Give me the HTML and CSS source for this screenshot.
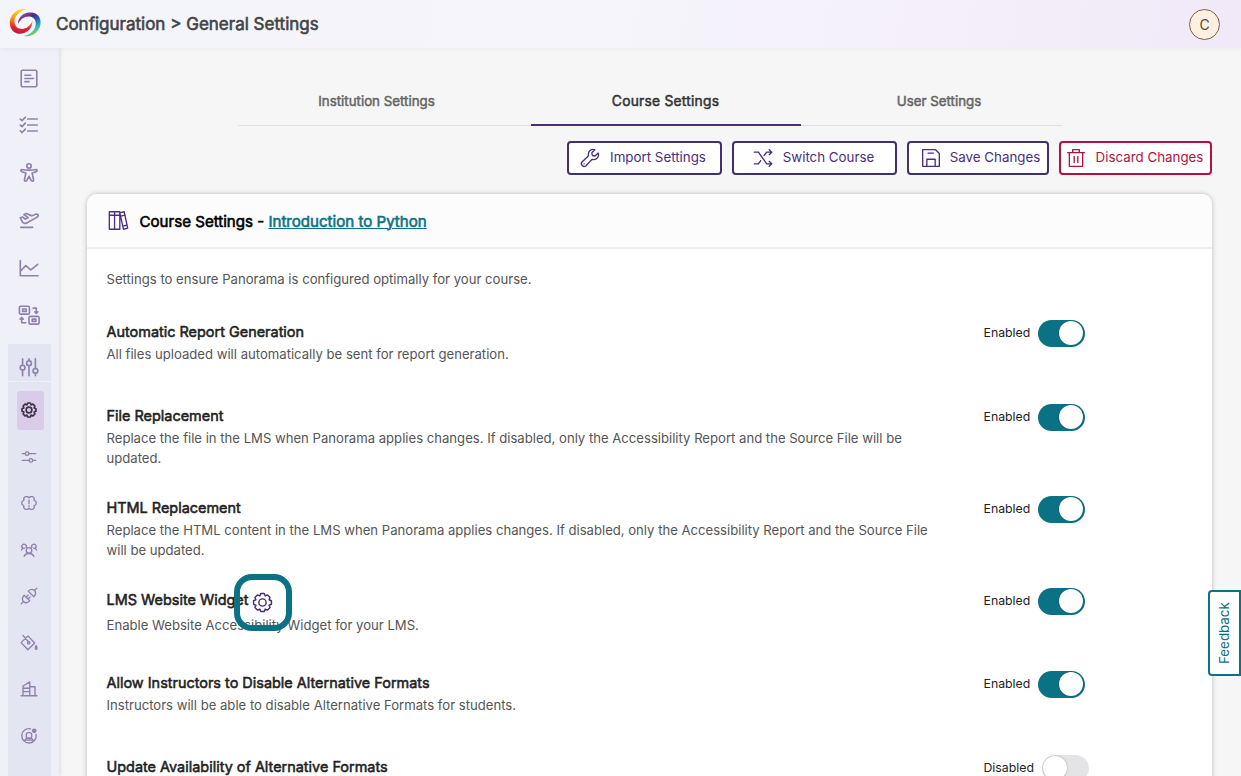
FILE: index.html
```html
<!DOCTYPE html>
<html lang="en">
<head>
<meta charset="utf-8">
<title>Configuration - General Settings</title>
<link rel="stylesheet" href="styles.css">
</head>
<body>

<!-- shared icons -->
<svg class="defs" width="0" height="0">
	<symbol id="gear" viewBox="0 0 24 24">
		<path d="M21.33 10.19V13.81L18.84 14.83 19.88 17.31 17.31 19.88 14.83 18.84 13.81 21.33H10.19L9.17 18.84 6.69 19.88 4.12 17.31 5.16 14.83 2.67 13.81V10.19L5.16 9.17 4.12 6.69 6.69 4.12 9.17 5.16 10.19 2.67H13.81L14.83 5.16 17.31 4.12 19.88 6.69 18.84 9.17Z"/>
		<circle cx="12" cy="12" r="3.8"/>
	</symbol>
</svg>

<header class="topbar">
	<svg class="logo" width="32" height="30" viewBox="9 8 32 30">
		<defs>
			<linearGradient id="warm" x1="0.6" y1="0" x2="0.5" y2="1">
				<stop offset="0" stop-color="#fbe21c"/>
				<stop offset=".4" stop-color="#f79a1e"/>
				<stop offset=".75" stop-color="#e3252b"/>
				<stop offset="1" stop-color="#b81f45"/>
			</linearGradient>
			<linearGradient id="cool" x1="0" y1="0.1" x2="0.55" y2="1">
				<stop offset="0" stop-color="#b04fa5"/>
				<stop offset=".35" stop-color="#4a2a86"/>
				<stop offset=".6" stop-color="#1f6cb8"/>
				<stop offset=".82" stop-color="#2fb9c4"/>
				<stop offset="1" stop-color="#8ccf4d"/>
			</linearGradient>
		</defs>
		<path fill="url(#warm)" d="M26.5 9.2C17 7.5 9.5 15 9.8 23C10 31 16 34.8 22 33.6C28 32.3 32.3 28 32.5 21C30 26.3 25.5 29.6 20.5 28.8C14.6 27.6 12.8 21 16.3 15.8C18.8 12.2 22.6 10 26.5 9.2Z"/>
		<path fill="url(#cool)" d="M23.9 36C33.4 37.7 40.9 30.2 40.6 22.2C40.4 14.2 34.4 12 28.4 12.6C22.4 13.5 18.2 17.6 17.9 24.2C20.4 18.9 24.9 15.9 29.9 16.6C35.8 17.6 37.6 24.2 34.1 29.4C31.6 33 27.8 35.2 23.9 36Z"/>
	</svg>
	<h1>Configuration &gt; General Settings</h1>
	<div class="avatar">C</div>
</header>

<div class="layout">
	<nav class="sidebar">
		<div class="nav_main">
			<a><svg viewBox="0 0 24 24"><rect x="3.5" y="3.5" width="17" height="18" rx="1.5"/><path d="M7.5 9H14M7.5 12.5H17M7.5 16H12"/></svg></a>
			<a><svg viewBox="0 0 24 24"><path d="M10.5 5.5H21M10.5 12H21M10.5 18.5H21M2.5 5.5L4.5 7.2 8 3.5M2.5 12L4.5 13.7 8 10M2.5 18.5L4.5 20.2 8 16.5"/></svg></a>
			<a><svg viewBox="0 0 24 24"><circle cx="12" cy="4.3" r="2.4"/><path d="M3.5 8.2Q2.6 10.2 4.3 10.6L8.6 12 7 19.5Q7.3 21.7 9.3 20.6L12 15.6 14.7 20.6Q16.7 21.7 17 19.5L15.4 12 19.7 10.6Q21.4 10.2 20.5 8.2Q12 9.6 3.5 8.2Z"/></svg></a>
			<a><svg viewBox="0 0 24 24"><path d="M3 20H16M2.5 9.5L5 8.7 8 11 11 9.5 6.5 6 9 5 15.3 7.5 19 5.8Q21.6 5 22.2 7Q22 8.5 20 9.4L9 15.5Q6.5 16.3 5 14.5Z"/></svg></a>
			<a><svg viewBox="0 0 24 24"><path d="M2.5 4V20.5H22M3 15L8.5 9.5 14 14 21.5 8"/></svg></a>
			<a><svg viewBox="0 0 24 24"><rect x="1.5" y="2.5" width="11" height="8.5" rx="1.5"/><rect x="12" y="13.5" width="11" height="8.5" rx="1.5"/><path d="M5 5.5H9V8H5ZM15.5 16.5H19.5V19H15.5ZM16.5 4.5H20V10M18.3 8.5L20 10.3 21.7 8.5M8.5 20.5H4V15M2.3 16.5L4 14.7 5.7 16.5"/></svg></a>
		</div>
		<div class="nav_sub">
			<a class="parent"><svg viewBox="0 0 24 24"><path d="M5 3V10M5 15.5V21.5M12 3V5M12 10.5V21.5M19 3V13.5M19 19V21.5"/><circle cx="5" cy="12.7" r="2.6"/><circle cx="12" cy="7.8" r="2.6"/><circle cx="19" cy="16.2" r="2.6"/></svg></a>
			<a class="current"><svg viewBox="0 0 24 24"><use href="#gear"/></svg></a>
			<a><svg viewBox="0 0 24 24"><path d="M3 7.5H7M12 7.5H21M3 16.5H12M17 16.5H21"/><circle cx="9.5" cy="7.5" r="2.4"/><circle cx="14.5" cy="16.5" r="2.4"/></svg></a>
			<a><svg viewBox="0 0 24 24"><path d="M7 3.5H10L12 5 14 3.5H17L19 5.5 18.8 8 21.5 10.5V13.5L18.8 16 19 18.5 17 20.5H14L12 19 10 20.5H7L5 18.5 5.2 16 2.5 13.5V10.5L5.2 8 5 5.5ZM12 8V13M12 15.5V16.5"/></svg></a>
			<a><svg viewBox="0 0 24 24"><circle cx="12" cy="12.5" r="3.7"/><path d="M5.5 20.5Q7 16.7 12 16.7T18.5 20.5M2 12Q2.6 9.5 6 9.5M22 12Q21.4 9.5 18 9.5M8.2 8.5A3 3 0 1 0 3.5 9.5M15.8 8.5A3 3 0 1 1 20.5 9.5"/></svg></a>
			<a><svg viewBox="0 0 24 24"><path d="M1.5 22.5L4.5 19.5M19.5 4.5L22.5 1.5M5.5 11L13 18.5Q8.5 23 4.5 19.5Q1.5 15 5.5 11ZM11 5.5L18.5 13Q22.5 9 19.5 4.5Q15 1.5 11 5.5ZM8.3 13.5L11 10.8M10.8 16L13.5 13.3"/></svg></a>
			<a><svg viewBox="0 0 24 24"><path d="M4 2L11.5 10.5M10.5 2.5L1.5 11.5 10.5 21 19.5 12ZM21.5 15.5Q23.8 19.8 21.5 20.3Q19.2 19.8 21.5 15.5Z"/><circle cx="11.5" cy="11.5" r="1.6"/></svg></a>
			<a><svg viewBox="0 0 24 24"><path d="M1.5 21H22.5M4 21V8L13 2.5V21M13 9H20V21M4 11H13M4 15.5H13"/></svg></a>
			<a><svg viewBox="0 0 24 24"><path d="M14 2.4A9.6 9.6 0 1 0 21.4 10M6.5 18.5Q7 14.5 12 14.5T17.5 18.5M8 17.5H16"/><rect x="8.5" y="7.5" width="7" height="8" rx="2.5"/><circle class="dot" cx="19" cy="5" r="2.2"/></svg></a>
		</div>
	</nav>

	<main class="content">
		<div class="tabs">
			<a class="tab tab1">Institution Settings</a>
			<a class="tab tab2 active">Course Settings</a>
			<a class="tab tab3">User Settings</a>
		</div>

		<div class="actions">
			<button class="btn import"><svg viewBox="0 0 24 24"><path d="M21.8 6L18 9.6 14.8 9 14.2 5.8 17.8 2C14 .8 9 3.6 10.2 9.2L2.2 17C.2 19.6 4 23.8 7 21.6L14.6 13.6C20.2 15 23.4 10.2 21.8 6Z"/><path d="M4.9 19H5"/></svg><span>Import Settings</span></button>
			<button class="btn switch_course"><svg viewBox="0 0 24 24"><path d="M1.5 5H6.5L16.5 19H22.5M1.5 19H6.5L9.2 15.2M13.3 9L16.5 5H22.5M19.5 2L22.5 5 19.5 8M19.5 16L22.5 19 19.5 22"/></svg><span>Switch Course</span></button>
			<button class="btn save"><svg viewBox="0 0 24 24"><path d="M2 2H17.5L22 6.5V22H2ZM7 22V13.5H17V22M8.5 6.2H15"/></svg><span>Save Changes</span></button>
			<button class="btn discard"><svg viewBox="0 0 24 24"><path d="M2 5.5H22M4 5.5V22H20V5.5M8 5.5V2H16V5.5M9.8 10V17.5M14.2 10V17.5"/></svg><span>Discard Changes</span></button>
		</div>

		<section class="card">
			<div class="card_head">
				<svg viewBox="0 0 24 24"><path d="M1.5 2H7.5V22H1.5ZM7.5 2H13.5V22H7.5ZM1.5 6H13.5M13.5 3.2L18.5 2 22.5 20.8 17.7 22ZM14.5 7L19.5 5.8M17 18.5L21.8 17.3"/></svg>
				<h2>Course Settings - <a href="#">Introduction to Python</a></h2>
			</div>
			<div class="card_body">
				<p class="intro">Settings to ensure Panorama is configured optimally for your course.</p>

				<div class="row">
					<div class="info">
						<h3>Automatic Report Generation</h3>
						<p>All files uploaded will automatically be sent for report generation.</p>
					</div>
					<div class="state"><span>Enabled</span><i class="toggle on"></i></div>
				</div>
				<div class="row">
					<div class="info">
						<h3>File Replacement</h3>
						<p>Replace the file in the LMS when Panorama applies changes. If disabled, only the Accessibility Report and the Source File will be updated.</p>
					</div>
					<div class="state"><span>Enabled</span><i class="toggle on"></i></div>
				</div>
				<div class="row">
					<div class="info">
						<h3>HTML Replacement</h3>
						<p>Replace the HTML content in the LMS when Panorama applies changes. If disabled, only the Accessibility Report and the Source File will be updated.</p>
					</div>
					<div class="state"><span>Enabled</span><i class="toggle on"></i></div>
				</div>
				<div class="row widget_row">
					<div class="info">
						<h3 class="with_gear">LMS Website Widget <span class="widget_gear"><svg viewBox="0 0 24 24"><use href="#gear"/></svg></span></h3>
						<p>Enable Website Accessibility Widget for your LMS.</p>
					</div>
					<div class="state"><span>Enabled</span><i class="toggle on"></i></div>
				</div>
				<div class="row">
					<div class="info">
						<h3>Allow Instructors to Disable Alternative Formats</h3>
						<p>Instructors will be able to disable Alternative Formats for students.</p>
					</div>
					<div class="state"><span>Enabled</span><i class="toggle on"></i></div>
				</div>
				<div class="row">
					<div class="info">
						<h3>Update Availability of Alternative Formats</h3>
					</div>
					<div class="state"><span>Disabled</span><i class="toggle"></i></div>
				</div>
			</div>
		</section>
	</main>
</div>

<button class="feedback">Feedback</button>

</body>
</html>
```

FILE: styles.css
```css
*, *::before, *::after {
	box-sizing: border-box;
}
body {
	margin: 0;
	height: 776px;
	overflow: hidden;
	background: #f6f6f6;
	font-family: Inter, "Liberation Sans", sans-serif;
	font-size: 13.33px;
	color: #222;
}
h1, h2, h3, p {
	margin: 0;
}
svg {
	fill: none;
	stroke: currentColor;
	stroke-linecap: round;
	stroke-linejoin: round;
	flex: none;
}
.defs {
	position: absolute;
}

/* top bar */
.topbar {
	position: relative;
	z-index: 2;
	display: flex;
	align-items: center;
	height: 48px;
	padding: 0 21px 0 9px;
	background: linear-gradient(100deg, #f4f4fb 0%, #f6f5fb 50%, #f4effa 75%, #f1e9f8 100%);
	box-shadow: 0 1px 5px rgba(0, 0, 0, .06);
}
.logo {
	stroke: none;
	margin-top: -2px;
}
.topbar h1 {
	margin: -1px 0 0 15px;
	font-size: 17px;
	font-weight: 400;
	-webkit-text-stroke: .6px #444;
	color: #444;
}
.avatar {
	display: flex;
	align-items: center;
	justify-content: center;
	width: 31px;
	height: 31px;
	margin-left: auto;
	border: 1.5px solid #7a6545;
	border-radius: 50%;
	background: #fdf0e0;
	font-size: 14px;
	color: #5c4a32;
}

.layout {
	display: flex;
	height: 728px;
}

/* sidebar */
.sidebar {
	width: 59px;
	flex: none;
	background: #f0f1f8;
	box-shadow: 1px 0 4px rgba(0, 0, 0, .12);
	color: #9080ac;
}
.sidebar svg {
	width: 22px;
	height: 22px;
	stroke-width: 1.8;
}
.nav_main {
	height: 296px;
	padding: 6px 1px 0 0;
}
.nav_main a {
	display: flex;
	align-items: center;
	justify-content: center;
	height: 47.5px;
}
.nav_sub {
	width: 43px;
	height: 432px;
	margin-left: 8px;
	background: #e3e5f3;
}
.nav_sub a {
	display: flex;
	align-items: center;
	justify-content: center;
	width: 27px;
	height: 39px;
	margin: 0 0 7.5px 9px;
	padding: 0 3px 1px 0;
	border-radius: 3px;
}
.nav_sub svg {
	width: 18px;
	height: 18px;
}
.nav_sub a.parent {
	width: 100%;
	height: 38px;
	padding: 8px 1px 0 0;
	margin: 0 0 9px;
	border-bottom: 1px solid #f0f1f8;
	border-radius: 0;
}
.nav_sub .parent svg {
	width: 22px;
	height: 22px;
}
.nav_sub a.current {
	background: #d9cce8;
	color: #3c3148;
}
.nav_sub .current svg {
	stroke-width: 2.2;
}
.dot {
	fill: currentColor;
}

/* main column */
.content {
	flex: 1;
	padding: 30px 29px 0 28px;
}
.tabs {
	display: flex;
	justify-content: space-between;
	width: 824px;
	height: 48px;
	margin-left: 151px;
	border-bottom: 1px solid #dfdfe1;
}
.tab {
	height: 48px;
	line-height: 47px;
	text-align: center;
	color: #666;
	-webkit-text-stroke: .5px currentColor;
}
.tab1 {
	width: 277px;
}
.tab2 {
	width: 270px;
}
.tab3 {
	width: 246px;
}
.tab.active {
	border-bottom: 2px solid #4a2f75;
	color: #333;
	font-size: 13.8px;
	letter-spacing: .24px;
}
.actions {
	display: flex;
	justify-content: flex-end;
	gap: 10px;
	margin-top: 15px;
}
.btn {
	display: flex;
	align-items: center;
	justify-content: center;
	height: 34px;
	padding: 0 2px 0 0;
	border: 2px solid #43306b;
	border-radius: 4px;
	background: #fff;
	font: inherit;
	color: #4a2f7a;
}
.btn svg {
	width: 20px;
	height: 20px;
	stroke-width: 1.6;
	margin-right: 10px;
}
.btn span {
	margin-top: -2px;
}
.import {
	width: 155px;
	padding-right: 3px;
}
.switch_course {
	width: 165px;
}
.save {
	width: 142px;
	padding: 0 0 0 5px;
}
.save svg {
	margin-right: 9px;
}
.discard {
	width: 153px;
	border-color: #b3123f;
	color: #b3123f;
}

.card {
	height: 620px;
	margin-top: 19px;
	border-radius: 10px;
	background: #fff;
	box-shadow: 0 0 5px rgba(0, 0, 0, .25);
}
.card_head {
	display: flex;
	align-items: center;
	height: 55px;
	padding-left: 21px;
	border-bottom: 2px solid #eee;
	border-radius: 10px 10px 0 0;
	background: #fcfcfc;
}
.card_head svg {
	width: 21px;
	height: 21px;
	margin-right: 10.5px;
	stroke-width: 1.5;
	color: #4a2f7a;
}
.card_head h2 {
	margin-top: 1px;
	font-size: 15.1px;
	font-weight: 400;
	color: #000;
	-webkit-text-stroke: .6px currentColor;
}
.card_head a {
	color: #0b7285;
}
.card_body {
	padding: 20px 19.5px 0;
}
.intro {
	line-height: 20px;
	margin-bottom: 32px;
	font-size: 13.12px;
	color: #555;
}
.row {
	display: flex;
	min-height: 54px;
	margin-bottom: 30px;
}
.widget_row {
	min-height: 53px;
}
.info {
	width: 877px;
}
.info h3 {
	height: 22px;
	line-height: 22px;
	font-size: 14.45px;
	font-weight: 400;
	-webkit-text-stroke: .55px currentColor;
}
.info p {
	width: 830px;
	margin: 1px 0 -1px;
	line-height: 20px;
	font-size: 13.12px;
	color: #555;
}
.info .with_gear {
	display: flex;
	height: 25px;
}
.widget_gear {
	position: relative;
	width: 20px;
	height: 22px;
	margin: 2px 0 0 2px;
	color: #43306b;
	-webkit-text-stroke: 0;
}
.widget_gear svg {
	display: block;
	width: 23px;
	height: 23px;
	stroke-width: 1.5;
}
/* highlight ring around the gear */
.widget_gear::after {
	content: "";
	position: absolute;
	left: -17px;
	top: -17px;
	width: 58px;
	height: 57px;
	border: 6px solid #0b7285;
	border-radius: 18px;
}
.state {
	display: flex;
	align-items: center;
	height: 24px;
	gap: 8px;
	font-size: 12.3px;
}
.state span {
	margin-top: -1px;
}
.toggle {
	width: 47px;
	height: 27px;
	padding: 1.5px;
	border-radius: 14px;
	background: #e4e4e6;
}
.toggle::before {
	content: "";
	display: block;
	width: 24px;
	height: 24px;
	border-radius: 50%;
	background: #fff;
	box-shadow: 0 0 2px rgba(0, 0, 0, .3);
}
.toggle.on {
	background: #0b7285;
}
.toggle.on::before {
	margin-left: 19px;
}

/* tab stuck to the window edge */
.feedback {
	position: absolute;
	z-index: 3;
	right: 0;
	top: 590px;
	width: 33px;
	height: 86px;
	padding: 0 0 0 2px;
	border: 2px solid #0b7285;
	border-radius: 0 4px 4px 0;
	background: #fff;
	font: 13.33px Inter, sans-serif;
	color: #0b7285;
	writing-mode: vertical-rl;
	transform: rotate(180deg);
}
```
